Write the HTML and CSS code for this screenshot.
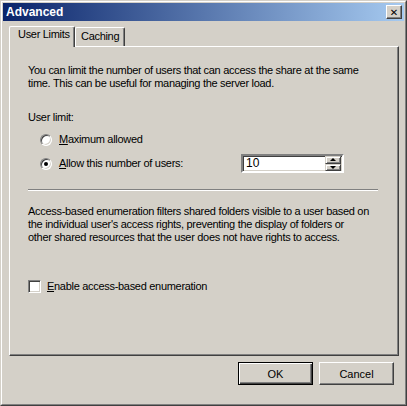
FILE: index.html
```html
<!DOCTYPE html>
<html lang="en">
<head>
  <meta charset="UTF-8">
  <title>Advanced</title>
  <link rel="stylesheet" href="styles.css">
</head>
<body>
  <div class="window">
    <div class="frame">
      <!-- Barra de título -->
      <div class="titlebar">
        <span class="title">Advanced</span>
        <button class="close-button">&#x2715;</button>
      </div>
      <div class="content">
        <div class="tabs">
          <div class="tab selected">User Limits</div>
          <div class="tab">Caching</div>
        </div>
        <div class="panel">
          <p class="text intro">You can limit the number of users that can access the share at the same time. This can be useful for managing the server load.</p>
          <div class="label">User limit:</div>
          <div class="option">
            <span class="radio"></span>
            <span><u>M</u>aximum allowed</span>
          </div>
          <div class="option spin-row">
            <span class="radio checked"></span>
            <span class="option-label"><u>A</u>llow this number of users:</span>
            <div class="spin">
              <span class="spin-value">10</span>
              <div class="spin-buttons">
                <span class="spin-btn"><span class="arrow up"></span></span>
                <span class="spin-btn"><span class="arrow down"></span></span>
              </div>
            </div>
          </div>
          <div class="separator"></div>
          <p class="text abe">Access-based enumeration filters shared folders visible to a user based on the individual user's access rights, preventing the display of folders or<br>other shared resources that the user does not have rights to access.</p>
          <div class="check-row">
            <span class="checkbox"></span>
            <span><u>E</u>nable access-based enumeration</span>
          </div>
        </div>
        <div class="buttons">
          <button class="btn default">OK</button>
          <button class="btn">Cancel</button>
        </div>
      </div>
    </div>
  </div>
</body>
</html>
```

FILE: styles.css
```css
/* Reset */
html, body {
  margin: 0;
  padding: 0;
}
body {
  font-family: "Liberation Sans", Arial, sans-serif;
  font-size: 11px;
  line-height: 13px;
  letter-spacing: -0.3px;
  color: #000;
  background: #d4d0c8;
}
/* Marco de la ventana */
.window {
  width: 405px;
  height: 404px;
  border: 1px solid;
  border-color: #d4d0c8 #404040 #404040 #d4d0c8;
  background: #d4d0c8;
}
.frame {
  height: 400px;
  border: 1px solid;
  border-color: #fff #808080 #808080 #fff;
  padding: 1px;
}
.titlebar {
  height: 18px;
  display: flex;
  align-items: center;
  justify-content: space-between;
  background: linear-gradient(to right, #0a246a, #a6caf0);
  padding: 0 2px 0 3px;
}
.title {
  color: #fff;
  font-weight: bold;
  font-size: 12px;
  letter-spacing: 0;
}
.close-button {
  width: 16px;
  height: 14px;
  padding: 0;
  margin: 0;
  background: #d4d0c8;
  border: 1px solid;
  border-color: #fff #404040 #404040 #fff;
  box-shadow: inset -1px -1px #808080;
  font-family: "DejaVu Sans", sans-serif;
  font-size: 10px;
  font-weight: bold;
  line-height: 11px;
  color: #000;
}
.content {
  padding: 5px 5px 0 6px;
}
/* Pestañas */
.tabs {
  display: flex;
  align-items: flex-end;
  height: 20px;
  position: relative;
  z-index: 1;
}
.tab {
  height: 16px;
  padding: 2px 0 0 5px;
  width: 43px;
  border: 1px solid;
  border-bottom: none;
  border-color: #fff #404040 #fff #fff;
  box-shadow: inset -1px 0 #808080;
  border-radius: 2px 2px 0 0;
  background: #d4d0c8;
}
.tab.selected {
  height: 19px;
  width: 56px;
  padding: 1px 0 0 8px;
  margin-bottom: -1px;
}
.panel {
  height: 291px;
  border: 1px solid;
  border-color: #fff #404040 #404040 #fff;
  box-shadow: inset -1px -1px #808080;
  padding: 17px 0 0 18px;
  width: 370px;
}
.text {
  margin: 0;
  width: 345px;
}
.label {
  margin-top: 21px;
}
.option {
  display: flex;
  align-items: center;
  gap: 7px;
  margin: 9px 0 0 12px;
}
.spin-row {
  margin-top: 8px;
}
.option-label {
  width: 175px;
}
.radio {
  width: 10px;
  height: 10px;
  border-radius: 50%;
  border: 1px solid;
  border-color: #808080 #fff #fff #808080;
  box-shadow: inset 1px 1px #404040, inset -1px -1px #d4d0c8;
  background: #fff;
  display: flex;
  align-items: center;
  justify-content: center;
}
.radio.checked::after {
  content: "";
  width: 4px;
  height: 4px;
  border-radius: 50%;
  background: #000;
}
/* Control numérico */
.spin {
  width: 99px;
  height: 15px;
  border: 2px solid;
  border-color: #808080 #fff #fff #808080;
  box-shadow: inset 1px 1px #404040, inset -1px -1px #d4d0c8;
  background: #fff;
  display: flex;
  justify-content: space-between;
  padding: 0;
}
.spin-value {
  padding: 1px 0 0 3px;
  font-size: 12px;
  letter-spacing: 0;
}
.spin-buttons {
  display: flex;
  flex-direction: column;
  padding: 0 1px 0 0;
}
.spin-btn {
  width: 14px;
  height: 6px;
  background: #d4d0c8;
  border: 1px solid;
  border-color: #d4d0c8 #404040 #404040 #d4d0c8;
  box-shadow: inset 1px 1px #fff, inset -1px -1px #808080;
  display: flex;
  align-items: center;
  justify-content: center;
}
.arrow {
  width: 0;
  height: 0;
  border-left: 3px solid transparent;
  border-right: 3px solid transparent;
}
.arrow.up {
  border-bottom: 3px solid #000;
}
.arrow.down {
  border-top: 3px solid #000;
}
.separator {
  width: 350px;
  height: 1px;
  background: #808080;
  border-bottom: 1px solid #fff;
  margin-top: 16px;
}
.abe {
  margin-top: 14px;
}
.check-row {
  display: flex;
  align-items: center;
  gap: 6px;
  margin-top: 36px;
}
.checkbox {
  width: 11px;
  height: 11px;
  border: 1px solid;
  border-color: #808080 #fff #fff #808080;
  box-shadow: inset 1px 1px #404040, inset -1px -1px #d4d0c8;
  background: #fff;
}
/* Botones inferiores */
.buttons {
  display: flex;
  justify-content: flex-end;
  gap: 6px;
  margin: 6px 5px 0 0;
}
.btn {
  width: 75px;
  height: 23px;
  padding: 0;
  background: #d4d0c8;
  border: 1px solid;
  border-color: #fff #404040 #404040 #fff;
  box-shadow: inset -1px -1px #808080;
  font-family: "Liberation Sans", Arial, sans-serif;
  font-size: 11px;
  color: #000;
}
.btn.default {
  border-color: #000;
  box-shadow: inset 1px 1px #fff, inset -1px -1px #404040, inset -2px -2px #808080;
}
```
